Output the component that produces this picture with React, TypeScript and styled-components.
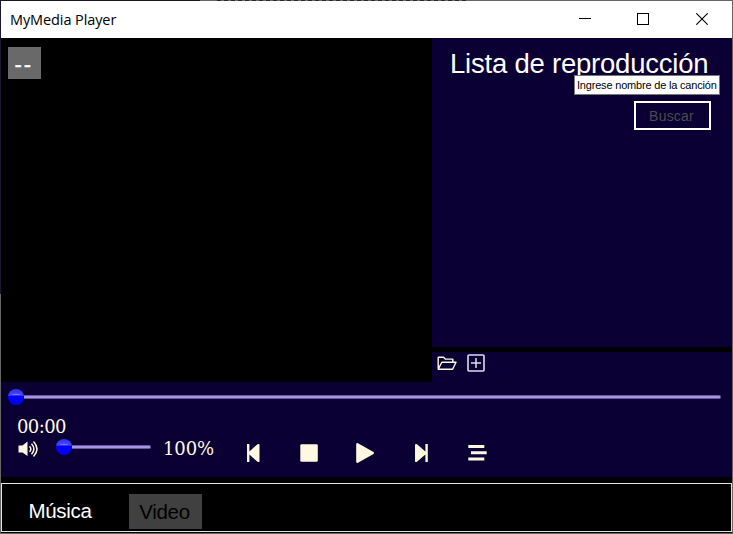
import React from "react";
import styled, { createGlobalStyle } from "styled-components";

const NAVY = "#0a0033";
const CREAM = "#fff8e1";

const GlobalStyle = createGlobalStyle`
  * { box-sizing: border-box; }
  body { margin: 0; background: #000; overflow: hidden; }
`;

const Frame = styled.div`
  width: 733px;
  height: 534px;
  padding: 1px;
  background:
    linear-gradient(#1c1628, #1c1628) 0 0 / 200px 1px no-repeat,
    repeating-linear-gradient(90deg, #2c282c 0 4px, #6c686c 4px 7px) 217px 0 / 252px 1px no-repeat,
    linear-gradient(#1c1630, #1c1630) 0 0 / 1px 294px no-repeat,
    #666;
`;

const Window = styled.div`
  height: 532px;
  display: flex;
  flex-direction: column;
  background: #000;
  font-family: "Liberation Sans", Arial, sans-serif;
  color: #fff;
`;

const TitleBar = styled.header`
  height: 37px;
  flex: none;
  display: flex;
  justify-content: space-between;
  background: #fff;
  color: #000;
`;

const Title = styled.span`
  padding-left: 9px;
  font: 14.5px/37px "Open Sans", "Noto Sans", sans-serif;
  letter-spacing: -0.1px;
  white-space: nowrap;
`;

const WindowButtons = styled.div`
  display: flex;
  padding-right: 1px;
`;

const WindowButton = styled.button`
  width: 58.5px;
  padding: 0 0 1px;
  border: 0;
  background: none;
  display: flex;
  align-items: center;
  justify-content: center;
  svg { display: block; }
`;

const Main = styled.main`
  height: 344px;
  flex: none;
  display: flex;
`;

const Screen = styled.section`
  width: 431px;
  padding: 9px 7px;
`;

const TrackLabel = styled.div`
  width: 33px;
  height: 32px;
  background: #696969;
  font-size: 22px;
  line-height: 35px;
  letter-spacing: 1.8px;
  padding-left: 6.5px;
  -webkit-text-stroke: 0.3px #fff;
`;

const Side = styled.aside`
  width: 300px;
  display: flex;
  flex-direction: column;
  gap: 5px;
`;

const Playlist = styled.section`
  height: 309px;
  background: ${NAVY};
  position: relative;
`;

const Heading = styled.h1`
  margin: 0;
  padding: 9px 0 0 18px;
  font-size: 27.5px;
  font-weight: 400;
  line-height: 34px;
  letter-spacing: -0.22px;
  white-space: nowrap;
`;

const Tooltip = styled.div`
  position: absolute;
  left: 142px;
  top: 37px;
  width: 146px;
  height: 20px;
  border: 1px solid #767676;
  background: #fff;
  color: #000;
  font-size: 11px;
  line-height: 18px;
  letter-spacing: -0.19px;
  padding-left: 2px;
  white-space: nowrap;
`;

const SearchButton = styled.button`
  display: block;
  width: 77px;
  height: 29px;
  margin: 20px 0 0 202px;
  padding: 1px 2px 0 0;
  border: 2px solid #fff;
  background: ${NAVY};
  color: #4c4c4c;
  font: 14px/25px "Liberation Sans", sans-serif;
  letter-spacing: 0.2px;
`;

const PlaylistTools = styled.div`
  height: 30px;
  padding: 1px 0 0 5px;
  display: flex;
  gap: 9px;
  background: ${NAVY};
  svg { display: block; }
`;

const Controls = styled.section`
  height: 95px;
  flex: none;
  background: ${NAVY};
  color: ${CREAM};
  padding: 6px 0 0 7px;
`;

const Slider = styled.div<{ $width: number }>`
  width: ${(p) => p.$width}px;
  height: 18px;
  display: flex;
  align-items: center;
`;

const Knob = styled.div`
  width: 16px;
  height: 16px;
  flex: none;
  border-radius: 50%;
  background:
    radial-gradient(ellipse 4px 1px at 50% 34%, #7474ff 0 80%, transparent 100%),
    linear-gradient(#3030f4 0, #4545ff 38%, #0000ff 46%, #0000f6 100%);
`;

const Track = styled.div`
  flex: 1;
  height: 4px;
  border-radius: 0 2px 2px 0;
  border: 1px solid #665894;
  border-left: 0;
  background: #a894e4;
`;

const Readout = styled.span`
  color: ${CREAM};
  font: 18px/22px "DejaVu Serif", serif;
  letter-spacing: -0.6px;
  white-space: nowrap;
`;

const Time = styled.div`
  height: 24px;
  display: flex;
  padding: 10px 0 0 9px;
`;

const Transport = styled.div`
  display: flex;
  height: 36px;
`;

const Volume = styled.div`
  display: flex;
  width: 233px;
  padding: 8px 0 0 10px;
  > svg { flex: none; margin: 2px 17px 0 0; }
  ${Readout} { margin: 0 0 0 12px; letter-spacing: -0.1px; }
`;

const Buttons = styled.div`
  display: flex;
  gap: 32px;
  padding-top: 11px;
`;

const IconButton = styled.button`
  width: 24px;
  height: 24px;
  padding: 0;
  border: 0;
  background: none;
  svg { display: block; }
`;

const Modes = styled.nav`
  margin-top: 6px;
  height: 49px;
  flex: none;
  display: flex;
  border: 1px solid #e4e4e4;
  padding: 10px 0 0 12px;
`;

const Mode = styled.button<{ $disabled?: boolean }>`
  height: 35px;
  width: ${(p) => (p.$disabled ? 73 : 93)}px;
  margin-right: 22px;
  padding: ${(p) => (p.$disabled ? "0 2px 0 0" : "0 1px 2px 0")};
  border: 0;
  background: ${(p) => (p.$disabled ? "#404040" : "transparent")};
  color: ${(p) => (p.$disabled ? "#000" : "#fff")};
  font: 20.5px/33px "Liberation Sans", sans-serif;
  letter-spacing: -0.3px;
`;

export default function App() {
  return (
    <>
      <GlobalStyle />
      <Frame>
        <Window>
          <TitleBar>
            <Title>MyMedia Player</Title>
            <WindowButtons>
              <WindowButton aria-label="Minimizar">
                <svg width="12" height="12" shapeRendering="crispEdges"><path d="M0 5.5h12" stroke="#000" /></svg>
              </WindowButton>
              <WindowButton aria-label="Maximizar">
                <svg width="12" height="12" shapeRendering="crispEdges"><path d="M.5.5h11v11H.5z" fill="none" stroke="#000" /></svg>
              </WindowButton>
              <WindowButton aria-label="Cerrar">
                <svg width="12" height="12"><path d="M.3.3l11.4 11.4M11.7.3L.3 11.7" stroke="#000" strokeWidth="1.1" /></svg>
              </WindowButton>
            </WindowButtons>
          </TitleBar>
          <Main>
            <Screen><TrackLabel>--</TrackLabel></Screen>
            <Side>
              <Playlist>
                <Heading>Lista de reproducción</Heading>
                <SearchButton>Buscar</SearchButton>
                <Tooltip>Ingrese nombre de la canción</Tooltip>
              </Playlist>
              <PlaylistTools>
                <svg width="20" height="20" fill="none" stroke={CREAM} strokeWidth="1.4" strokeLinejoin="round">
                  <path d="M1.2 15.5V4.7Q1.2 4.2 1.7 4.2H6.5L8.3 6.1H15.8V9.1M1.2 16.3L4.8 9.3H19L15.6 16.3Z" />
                </svg>
                <svg width="20" height="20" fill="none" stroke="#e0dce6">
                  <rect x="2" y="2" width="16" height="16" rx="1" strokeWidth="1.6" />
                  <path d="M10 5v10M5 10h10" strokeWidth="1.5" />
                </svg>
              </PlaylistTools>
            </Side>
          </Main>
          <Controls>
            <Slider $width={713}><Knob /><Track /></Slider>
            <Time><Readout>00:00</Readout></Time>
            <Transport>
              <Volume>
                <svg width="21" height="18" viewBox="0 0 21 18" fill="none" stroke={CREAM}>
                  <path d="M.5 5.5h4L9.5 1.5v14.5L4.5 12.5h-4z" fill={CREAM} stroke="none" />
                  <path d="M11.5 6.2q2.7 2.8 0 5.6M13.5 3.7q4.8 5.3 0 10.6M15.5 1.5q7 7.5 0 15" strokeWidth="1.5" />
                </svg>
                <Slider $width={95}><Knob /><Track /></Slider>
                <Readout>100%</Readout>
              </Volume>
              <Buttons>
                <IconButton aria-label="Anterior">
                  <svg width="24" height="24" fill={CREAM}><path d="M6 3h2.4v7.5L16.5 3.2q1.2-.6 2 .3v17q-.8.9-2 .3L8.4 13.5V21H6z" /></svg>
                </IconButton>
                <IconButton aria-label="Detener">
                  <svg width="24" height="24" fill={CREAM}><rect x="3.3" y="3.3" width="17.5" height="17.5" rx="1.2" /></svg>
                </IconButton>
                <IconButton aria-label="Reproducir">
                  <svg width="24" height="24" fill={CREAM}><path d="M3.2 3.5Q3.2 1.5 5 2.3L20.5 11q1.2 1 0 2L5 21.7q-1.8.8-1.8-1.2z" /></svg>
                </IconButton>
                <IconButton aria-label="Siguiente">
                  <svg width="24" height="24" fill={CREAM}><path d="M18.8 3h-2.4v7.5L8 3.2q-1.2-.6-2 .3v17q.8.9 2 .3l8.4-7.3V21h2.4z" /></svg>
                </IconButton>
                <IconButton aria-label="Lista">
                  <svg width="24" height="24" stroke={CREAM} strokeWidth="3"><path d="M3.3 5.4H19.3M6 11.7H21.7M3.3 18H19.3" /></svg>
                </IconButton>
              </Buttons>
            </Transport>
          </Controls>
          <Modes>
            <Mode>Música</Mode>
            <Mode $disabled>Video</Mode>
          </Modes>
        </Window>
      </Frame>
    </>
  );
}
